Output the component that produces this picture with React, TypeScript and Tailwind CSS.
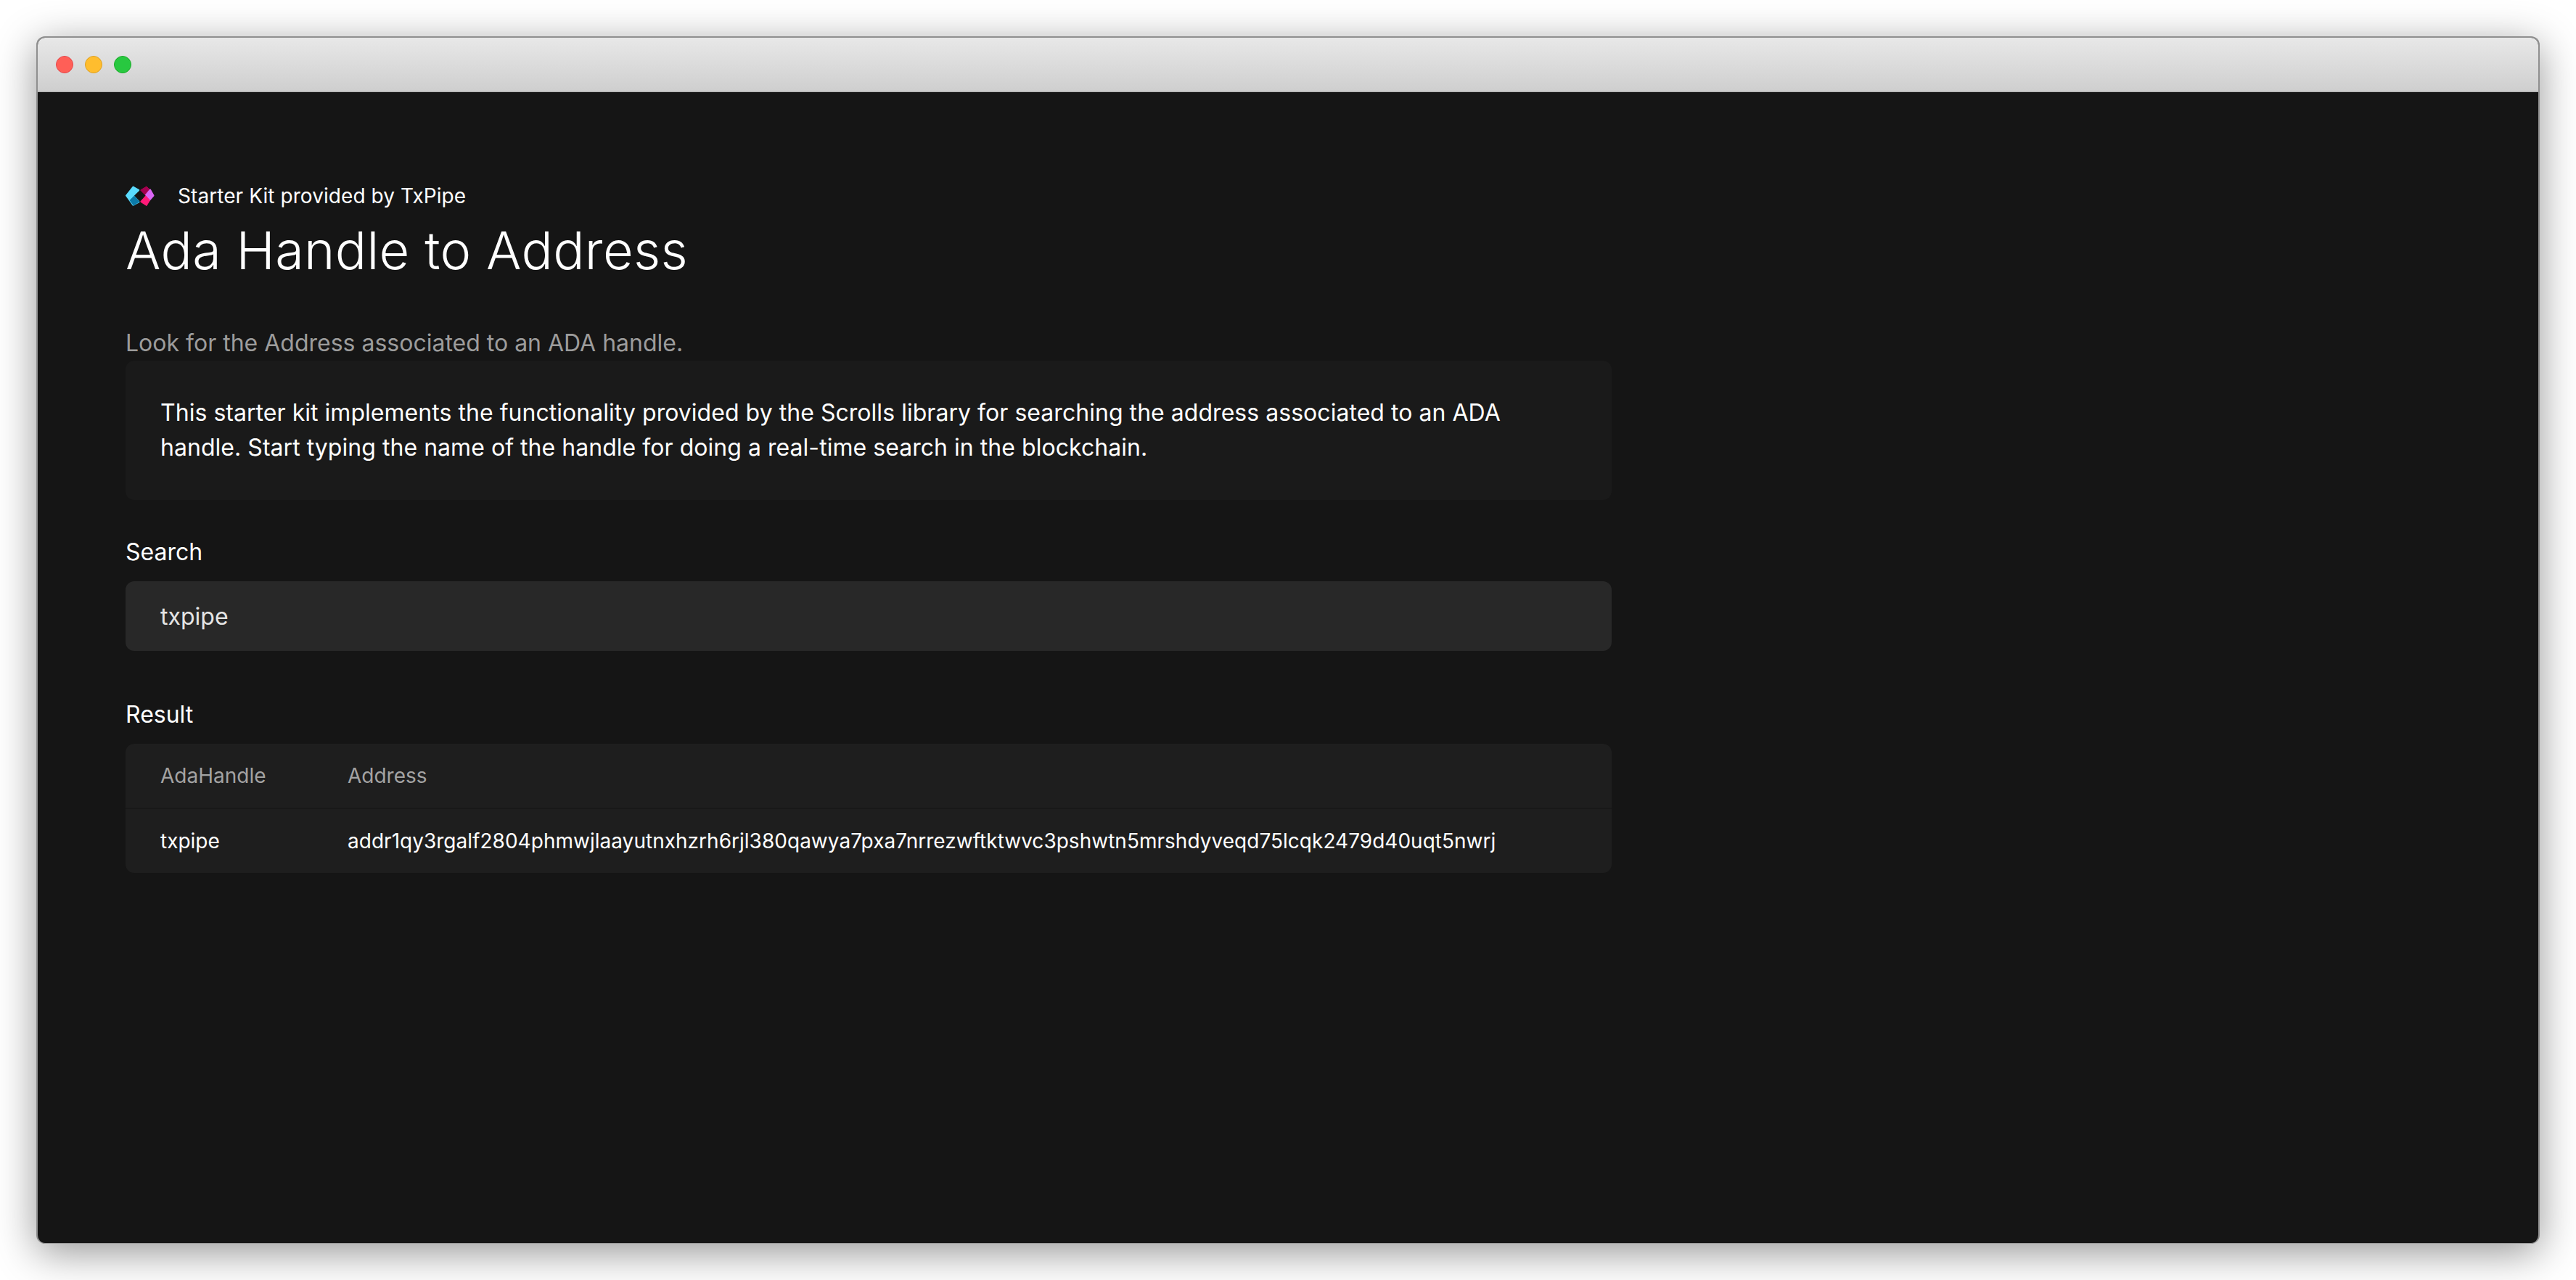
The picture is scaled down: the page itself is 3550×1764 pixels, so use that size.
export default function App() {
  return (
    <div className="min-h-[1764px] bg-white pl-[50px] pr-[50px] pt-[50px] pb-[50px] font-['Inter',sans-serif]">
      <div className="flex h-[1664px] w-[3450px] flex-col overflow-hidden rounded-[12px] border-x-2 border-t-2 border-b border-x-[#8f8f8f] border-t-[#8f8f8f] border-b-[#999] bg-[#151515] shadow-[0_12px_56px_rgba(0,0,0,0.42)]">
        <div className="flex h-[75px] shrink-0 items-center gap-[16px] border-b-2 border-[#b9b9b9] bg-gradient-to-b from-[#e8e8e8] to-[#cfcfcf] pl-[25px]">
          <span className="h-[24px] w-[24px] rounded-full border border-[#e5484d] bg-[#ff5f57]" />
          <span className="h-[24px] w-[24px] rounded-full border border-[#dea123] bg-[#ffbd2e]" />
          <span className="h-[24px] w-[24px] rounded-full border border-[#1aab29] bg-[#28c840]" />
        </div>
        <div className="w-[2169px] pl-[121px] pt-[123px]">
          <div className="flex h-[40px] items-center">
            <svg width="40" height="28" viewBox="0 0 40 28" className="shrink-0" strokeLinejoin="round">
              <path d="M1 13.500 10.500 1.500 18.500 6 11.500 13.500 19 22 10.500 26.700Z" fill="#5adbff" stroke="#5adbff" strokeWidth="2" />
              <path d="M12 13.500 19.500 22 11 27.500 5.500 20Z" fill="#0b7aa8" />
              <path d="M20.500 6 29 1 34.500 6.500 27.500 13.500Z" fill="#a5004f" stroke="#a5004f" strokeWidth="1" />
              <path d="M34 5.500 38.500 13.500 31.500 21.500 27.500 13.500Z" fill="#d966f5" stroke="#d966f5" strokeWidth="2" />
              <path d="M27.500 13.500 33.500 20 29 27.500 20.500 22Z" fill="#ff1a78" stroke="#ff1a78" strokeWidth="1" />
              <path d="M12 13.500 19.800 6.200 27.500 13.500 19.800 21.800Z" fill="#151515" />
              <path d="M19.400 0V28H20.200V0Z" fill="#151515" />
            </svg>
            <span className="ml-[32px] text-[28px] leading-[40px] tracking-[0.07px] text-white">Starter Kit provided by TxPipe</span>
          </div>
          <h1 className="mt-[15px] text-[72px] font-light leading-[80px] tracking-[0.33px] text-white">Ada Handle to Address</h1>
          <p className="mt-[68px] text-[32px] leading-[40px] text-[#9c9c9c]">Look for the Address associated to an ADA handle.</p>
          <div className="mt-[4px] h-[192px] rounded-[12px] bg-[#1a1a1a] px-[48px] pt-[48px] text-[32px] leading-[48px] tracking-[0.04px] text-white">
            This starter kit implements the functionality provided by the Scrolls library for searching the address associated to an ADA handle. Start typing the name of the handle for doing a real-time search in the blockchain.
          </div>
          <div className="mt-[52px] text-[32px] leading-[40px] text-white">Search</div>
          <div className="mt-[20px] flex h-[96px] items-center rounded-[12px] bg-[#282828] px-[48px] pt-[1px] text-[32px] text-[#e5e5e5]">txpipe</div>
          <div className="mt-[68px] text-[32px] leading-[40px] text-white">Result</div>
          <div className="mt-[20px] overflow-hidden rounded-[12px] bg-[#1e1e1e] text-[28px]">
            <div className="box-content grid h-[88px] grid-cols-[306px_1fr] items-center border-b-2 border-[#191919]">
              <span className="pl-[48px] text-[#a3a3a3]">AdaHandle</span>
              <span className="text-[#a3a3a3]">Address</span>
            </div>
            <div className="grid h-[88px] grid-cols-[306px_1fr] items-center text-white">
              <span className="pl-[48px]">txpipe</span>
              <span className="tracking-[0.02px]">addr1qy3rgalf2804phmwjlaayutnxhzrh6rjl380qawya7pxa7nrrezwftktwvc3pshwtn5mrshdyveqd75lcqk2479d40uqt5nwrj</span>
            </div>
          </div>
        </div>
      </div>
    </div>
  );
}
